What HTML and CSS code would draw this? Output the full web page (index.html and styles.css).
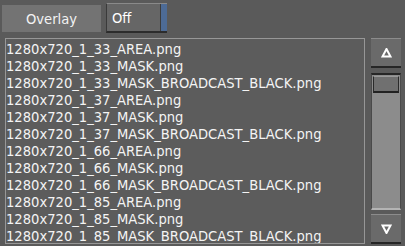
FILE: index.html
```html
<!doctype html>
<html lang="en">
<head>
    <meta charset="UTF-8">
    <title>Overlay</title>
    <link rel="stylesheet" href="styles.css">
</head>
<body>
<div class="toolbar">
    <div class="label-btn">Overlay</div>
    <div class="toggle">
        <span class="toggle-text">Off</span>
        <span class="toggle-tab"></span>
    </div>
</div>
<div class="browser">
    <div class="files">
        <div class="file">1280x720_1_33_AREA.png</div>
        <div class="file">1280x720_1_33_MASK.png</div>
        <div class="file">1280x720_1_33_MASK_BROADCAST_BLACK.png</div>
        <div class="file">1280x720_1_37_AREA.png</div>
        <div class="file">1280x720_1_37_MASK.png</div>
        <div class="file">1280x720_1_37_MASK_BROADCAST_BLACK.png</div>
        <div class="file">1280x720_1_66_AREA.png</div>
        <div class="file">1280x720_1_66_MASK.png</div>
        <div class="file">1280x720_1_66_MASK_BROADCAST_BLACK.png</div>
        <div class="file">1280x720_1_85_AREA.png</div>
        <div class="file">1280x720_1_85_MASK.png</div>
        <div class="file">1280x720_1_85_MASK_BROADCAST_BLACK.png</div>
    </div>
    <div class="scroll">
        <div class="arrow-btn">
            <svg width="11" height="10" viewBox="0 0 11 10"><path d="M5.5 1 L1.5 8.5 L9.5 8.5 Z" fill="none" stroke="#fff" stroke-width="2" stroke-linejoin="miter"/></svg>
        </div>
        <div class="track">
            <div class="thumb"></div>
        </div>
        <div class="arrow-btn">
            <svg width="11" height="10" viewBox="0 0 11 10"><path d="M5.5 9 L1.5 1.5 L9.5 1.5 Z" fill="none" stroke="#fff" stroke-width="2" stroke-linejoin="miter"/></svg>
        </div>
    </div>
</div>
</body>
</html>
```

FILE: styles.css
```css
* {margin: 0; padding: 0; box-sizing: border-box;}
body {background: #5a5a5a; width: 405px; height: 246px; overflow: hidden; font-family: "DejaVu Sans Condensed", "DejaVu Sans", sans-serif; font-stretch: condensed; color: #fff;}

.toolbar {display: flex; align-items: center; height: 36px; padding: 0 0 0 2px; gap: 5px;}
.label-btn {width: 99px; height: 27px; background: #737373; font-size: 14.6px; line-height: 27px; text-align: center; color: #f2f2f2;}
.toggle {display: flex; width: 61px; height: 30px; border-top: 1px solid #8a8a8a; border-bottom: 2px solid #2c2c2c; border-left: 1px solid #3a3a3a;}
.toggle-text {flex: 1; background: #666; font-size: 14.6px; line-height: 27px; padding-left: 5px;}
.toggle-tab {width: 7px; background: #4d6b96; border-left: 1px solid #3c3c3c;}

.browser {display: flex; gap: 6px; padding: 2px 0 0 5px;}
.files {width: 360px; height: 206px; border: 1px solid #979797; background: #5c5c5c; padding: 1px 0 0 0; overflow: hidden;}
.file {font-size: 14.6px; line-height: 17px; height: 17px; white-space: nowrap; color: #f4f4f4;}

.scroll {display: flex; flex-direction: column; width: 30px; height: 206px;}
.arrow-btn {height: 30px; background: #6a6a6a; border-top: 1px solid #8c8c8c; border-bottom: 2px solid #262626; display: flex; align-items: center; justify-content: center;}
.track {flex: 1; margin: 5px 0 4px; background: #8c8c8c; border-top: 2px solid #262626; border-left: 1px solid #4a4a4a; border-right: 1px solid #4a4a4a; border-bottom: 2px solid #b4b4b4; padding: 1px 1px 0;}
.thumb {height: 17px; background: #707070; border: 1px solid #2a2a2a; border-top-color: #9a9a9a; border-bottom: 2px solid #222;}
```
